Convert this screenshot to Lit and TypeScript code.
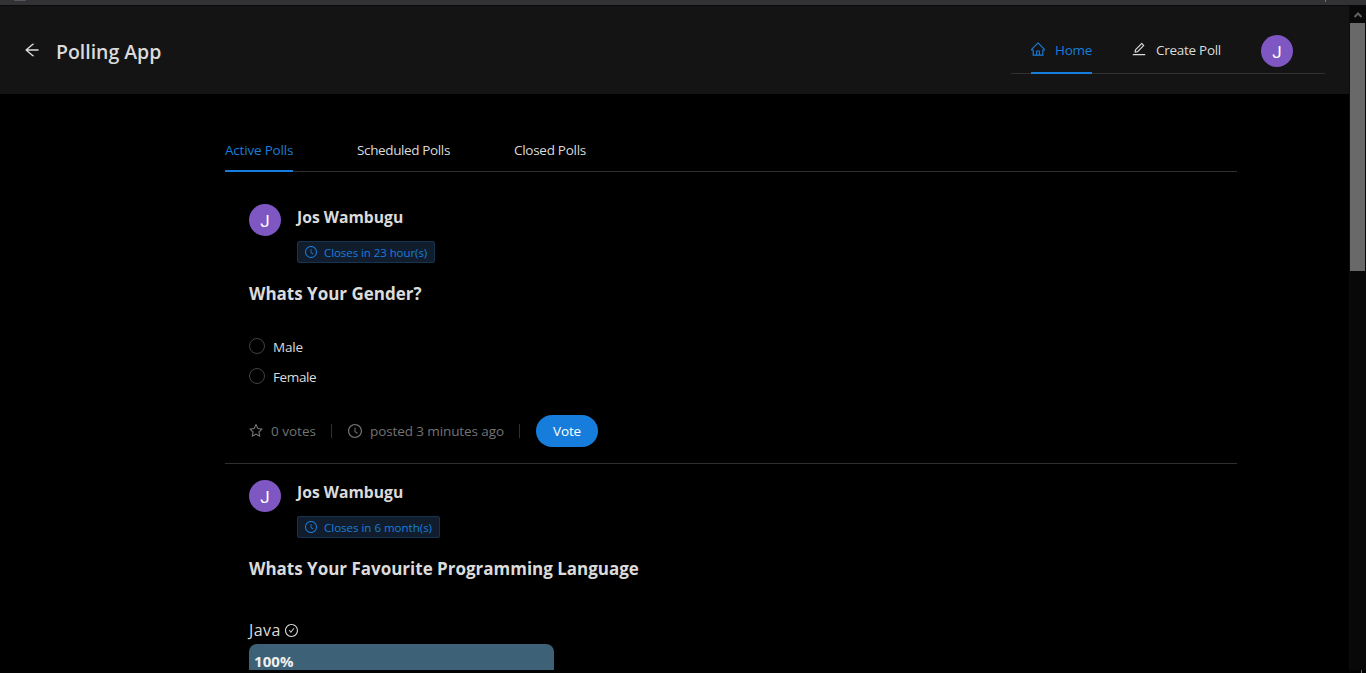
import { LitElement, html, css } from "lit";
import { customElement, property } from "lit/decorators.js";

const RING =
  "M512 64C264.6 64 64 264.6 64 512s200.6 448 448 448 448-200.6 448-448S759.4 64 512 64zm0 820c-205.4 0-372-166.6-372-372s166.6-372 372-372 372 166.6 372 372-166.6 372-372 372z";

const ICONS: Record<string, string> = {
  back: "M872 474H286.9l350.2-304c5.6-4.9 2.2-14-5.2-14h-88.5c-3.9 0-7.6 1.4-10.5 3.9L155 487.8a31.96 31.96 0 000 48.3L535.1 866c1.5 1.3 3.3 2 5.2 2h91.5c7.4 0 10.8-9.2 5.2-14L286.9 550H872c4.4 0 8-3.6 8-8v-60c0-4.4-3.6-8-8-8z",
  home: "M946.5 505L560.1 118.8l-25.9-25.9a31.5 31.5 0 00-44.4 0L77.5 505a63.9 63.9 0 00-18.8 46c.4 35.2 29.7 63.3 64.9 63.3h42.5V940h691.8V614.3h43.4c17.1 0 33.2-6.7 45.3-18.8a63.6 63.6 0 0018.7-45.3c0-17-6.7-33.1-18.8-45.2zM568 868H456V664h112v204zm217.9-325.7V868H632V640c0-22.1-17.9-40-40-40H432c-22.1 0-40 17.9-40 40v228H238.1V542.3h-96l370-369.7 23.1 23.1L882 542.3h-96.1z",
  edit: "M257.7 752c2 0 4-.2 6-.5L431.9 722c2-.4 3.9-1.3 5.3-2.8l423.9-423.9a9.96 9.96 0 000-14.1L694.9 114.9c-1.9-1.9-4.4-2.9-7.1-2.9s-5.2 1-7.1 2.9L256.8 538.8c-1.5 1.5-2.4 3.3-2.8 5.3l-29.5 168.2a33.5 33.5 0 009.4 29.8c6.6 6.4 14.9 9.9 23.8 9.9zm67.4-174.4L687.8 215l73.3 73.3-362.7 362.6-88.9 15.7 15.6-89zM880 836H144c-17.7 0-32 14.3-32 32v36c0 4.4 3.6 8 8 8h784c4.4 0 8-3.6 8-8v-36c0-17.7-14.3-32-32-32z",
  clock:
    RING +
    "M686.7 638.6L544.1 535.5V288c0-4.4-3.6-8-8-8H488c-4.4 0-8 3.6-8 8v275.4c0 2.6 1.2 5 3.3 6.5l165.4 120.6c3.6 2.6 8.6 1.8 11.2-1.7l28.6-39c2.6-3.7 1.8-8.7-1.8-11.2z",
  check:
    RING +
    "M699 353h-46.9c-10.2 0-19.9 4.9-25.9 13.3L469 584.3l-71.2-98.8c-6-8.3-15.6-13.3-25.9-13.3H325c-6.5 0-10.3 7.4-6.5 12.7l124.6 172.8a31.8 31.8 0 0051.7 0l210.6-292c3.9-5.3.1-12.7-6.4-12.7z",
  star: "M908.1 353.1l-253.9-36.9L540.7 86.1c-3.1-6.3-8.2-11.4-14.5-14.5-15.8-7.8-35-1.3-42.9 14.5L369.8 316.2l-253.9 36.9c-7 1-13.4 4.3-18.3 9.3a32.05 32.05 0 00.6 45.3l183.7 179.1-43.4 252.9a31.95 31.95 0 0046.4 33.7L512 754l227.1 119.4c6.2 3.3 13.4 4.4 20.3 3.2 17.4-3 29.1-19.5 26.1-36.9l-43.4-252.9 183.7-179.1c5-4.9 8.3-11.3 9.3-18.3 2.7-17.5-9.5-33.7-27-36.3zM664.8 561.6l36.1 210.3L512 672.7 323.1 772l36.1-210.3-152.8-149L417.6 382 512 190.7 606.4 382l211.2 30.7-152.8 148.9z",
};

@customElement("ui-icon")
export class UiIcon extends LitElement {
  static styles = css`
    :host { display: block; flex: none; width: 14px; height: 14px; }
    .glyph { display: block; width: 100%; height: 100%; fill: currentColor; }
  `;
  @property() name = "home";
  render() {
    return html`<svg class="glyph" viewBox="64 64 896 896"><path d=${ICONS[this.name]} /></svg>`;
  }
}

@customElement("user-avatar")
export class UserAvatar extends LitElement {
  static styles = css`
    :host {
      display: block; flex: none; box-sizing: border-box; width: 32px; height: 32px; padding-top: 1px;
      border-radius: 50%; background: #7e57c2; color: #fff; text-align: center;
      font: 17px/32px Roboto, sans-serif;
    }
  `;
  render() {
    return html`J`;
  }
}

@customElement("poll-header")
export class PollHeader extends LitElement {
  static styles = css`
    :host { display: block; }
    .head { display: flex; gap: 16px; }
    .name { font-size: 15.7px; line-height: 24px; font-weight: 700; padding-top: 1px; }
    .tag {
      display: flex; align-items: center; gap: 7px; box-sizing: border-box;
      width: max-content; height: 22px; margin-top: 12px; padding: 0 7px;
      border: 1px solid #153450; border-radius: 2px; background: #111d2c;
      color: #177ddc; font-size: 11.5px; line-height: 20px;
    }
    .tag ui-icon { width: 12px; height: 12px; }
    .closes { letter-spacing: -0.07px; padding-top: 1px; }
    .question { margin: 17px 0 0; font-size: 17px; line-height: 28px; font-weight: 700; letter-spacing: -0.01px; }
    :host(.compact) user-avatar { margin-top: 1px; }
    :host(.compact) .closes { letter-spacing: 0; }
  `;
  @property() closes = "";
  @property() question = "";
  render() {
    return html`
      <div class="head">
        <user-avatar></user-avatar>
        <div>
          <div class="name">Jos Wambugu</div>
          <div class="tag"><ui-icon name="clock"></ui-icon><span class="closes">${this.closes}</span></div>
        </div>
      </div>
      <h3 class="question">${this.question}</h3>
    `;
  }
}

@customElement("app-root")
export class AppRoot extends LitElement {
  static styles = css`
    :host {
      display: grid; grid-template-rows: 5px 665px 3px; height: 673px; overflow: hidden;
      background: #000; color: #dbdbdb; font: 13.5px/22px "Open Sans", sans-serif;
    }
    .chrome { display: flex; justify-content: space-between; background: #323234; }
    .smudge { width: 12px; height: 1px; margin-left: 14px; background: #55555a; border-radius: 0 0 6px 6px; }
    .tick { width: 1px; height: 2px; margin-right: 40px; background: #77777a; }
    .view { display: grid; grid-template-columns: 1349px 17px; overflow: hidden; }
    .page { overflow: hidden; border-top: 1px solid #0b0b0b; }
    .top { display: flex; justify-content: space-between; height: 88px; background: #141414; }
    .brand { display: flex; gap: 16px; padding: 30px 0 0 24px; }
    .brand ui-icon { width: 16px; height: 16px; margin-top: 6px; }
    .title { font-size: 19.5px; line-height: 32px; font-weight: 600; letter-spacing: -0.03px; }
    .menu {
      display: flex; gap: 40px; box-sizing: border-box; width: 314px; height: 46px;
      margin: 22px 24px 0 0; padding: 0 20px; border-bottom: 1px solid #303030;
    }
    .menu-item { display: flex; gap: 10px; box-sizing: border-box; height: 46px; padding-top: 11px; white-space: nowrap; }
    .menu-item ui-icon { margin-top: 3px; }
    .menu-item.current { color: #177ddc; border-bottom: 2px solid #177ddc; width: 61px; }
    .menu user-avatar { margin-top: 7px; }
    .s28 { letter-spacing: -0.28px; }
    .s20 { letter-spacing: -0.2px; }
    .s37 { letter-spacing: -0.37px; }
    .s10 { letter-spacing: -0.1px; }
    .content { width: 1012px; margin: 33px 0 0 225px; }
    .tabs { display: flex; gap: 64px; height: 44px; border-bottom: 1px solid #303030; }
    .tab { box-sizing: border-box; height: 45px; padding-top: 12px; white-space: nowrap; }
    .tab.current { width: 68px; color: #177ddc; border-bottom: 2px solid #177ddc; }
    .tab.scheduled { width: 93px; }
    .poll { padding: 0 24px; }
    .poll.first { margin-top: 32px; }
    .poll.second { padding-top: 15px; border-top: 1px solid #303030; }
    .choices { display: grid; gap: 8px; margin-top: 28px; }
    .choice { display: flex; gap: 8px; }
    .radio { box-sizing: border-box; width: 16px; height: 16px; margin-top: 2px; border: 1px solid #424242; border-radius: 50%; }
    .meta { display: flex; align-items: center; height: 32px; margin: 27px 0 16px; color: #737373; }
    .stat { display: flex; align-items: center; gap: 8px; width: 67px; }
    .stat.posted { width: 156px; }
    .rule { width: 1px; height: 14px; margin: 0 16px 0 15px; background: #303030; }
    .vote {
      width: 62px; height: 32px; padding: 0 0 1px; border: 0; border-radius: 16px;
      background: #177ddc; color: #fff; font: inherit; letter-spacing: -0.15px;
    }
    .option { display: flex; align-items: center; gap: 4px; height: 24px; margin-top: 35px; font-size: 16px; line-height: 24px; letter-spacing: 0.4px; }
    .option ui-icon { width: 13px; height: 13px; margin-top: 1px; }
    .bar {
      box-sizing: border-box; width: 305px; height: 26px; margin-top: 2px; padding: 9px 0 0 5px;
      border-radius: 8px 8px 0 0; background: #3d6278; color: #f0f0f0;
      font-size: 15px; line-height: 17px; font-weight: 700; letter-spacing: 0.05px;
    }
    .scroll { background: #080808; border-left: 1px solid #0c0c0c; }
    .arrow { display: block; width: 16px; height: 18px; }
    .thumb { width: 15px; height: 248px; background: #696969; }
    .foot { display: flex; justify-content: flex-end; background: #020202; }
    .foot-tick { width: 1px; height: 3px; margin-right: 4px; background: #707070; }
  `;
  render() {
    return html`
      <div class="chrome"><div class="smudge"></div><div class="tick"></div></div>
      <div class="view">
        <div class="page">
          <header class="top">
            <div class="brand"><ui-icon name="back"></ui-icon><div class="title">Polling App</div></div>
            <nav class="menu">
              <div class="menu-item current"><ui-icon name="home"></ui-icon><span class="s28">Home</span></div>
              <div class="menu-item"><ui-icon name="edit"></ui-icon><span class="s28">Create Poll</span></div>
              <user-avatar></user-avatar>
            </nav>
          </header>
          <main class="content">
            <div class="tabs">
              <div class="tab current s20">Active Polls</div>
              <div class="tab scheduled s37">Scheduled Polls</div>
              <div class="tab s28">Closed Polls</div>
            </div>
            <section class="poll first">
              <poll-header closes="Closes in 23 hour(s)" question="Whats Your Gender?"></poll-header>
              <div class="choices">
                <div class="choice"><span class="radio"></span><span class="s20">Male</span></div>
                <div class="choice"><span class="radio"></span><span class="s37">Female</span></div>
              </div>
              <div class="meta">
                <div class="stat"><ui-icon name="star"></ui-icon><span>0 votes</span></div>
                <i class="rule"></i>
                <div class="stat posted"><ui-icon name="clock"></ui-icon><span class="s10">posted 3 minutes ago</span></div>
                <i class="rule"></i>
                <button class="vote">Vote</button>
              </div>
            </section>
            <section class="poll second">
              <poll-header class="compact" closes="Closes in 6 month(s)" question="Whats Your Favourite Programming Language"></poll-header>
              <div class="option"><span>Java</span><ui-icon name="check"></ui-icon></div>
              <div class="bar">100%</div>
            </section>
          </main>
        </div>
        <div class="scroll">
          <svg class="arrow" viewBox="0 0 16 18"><path d="M4.5 12l3.5-3.5L11.5 12" fill="none" stroke="#606060" stroke-width="2" /></svg>
          <div class="thumb"></div>
        </div>
      </div>
      <div class="foot"><div class="foot-tick"></div></div>
    `;
  }
}
